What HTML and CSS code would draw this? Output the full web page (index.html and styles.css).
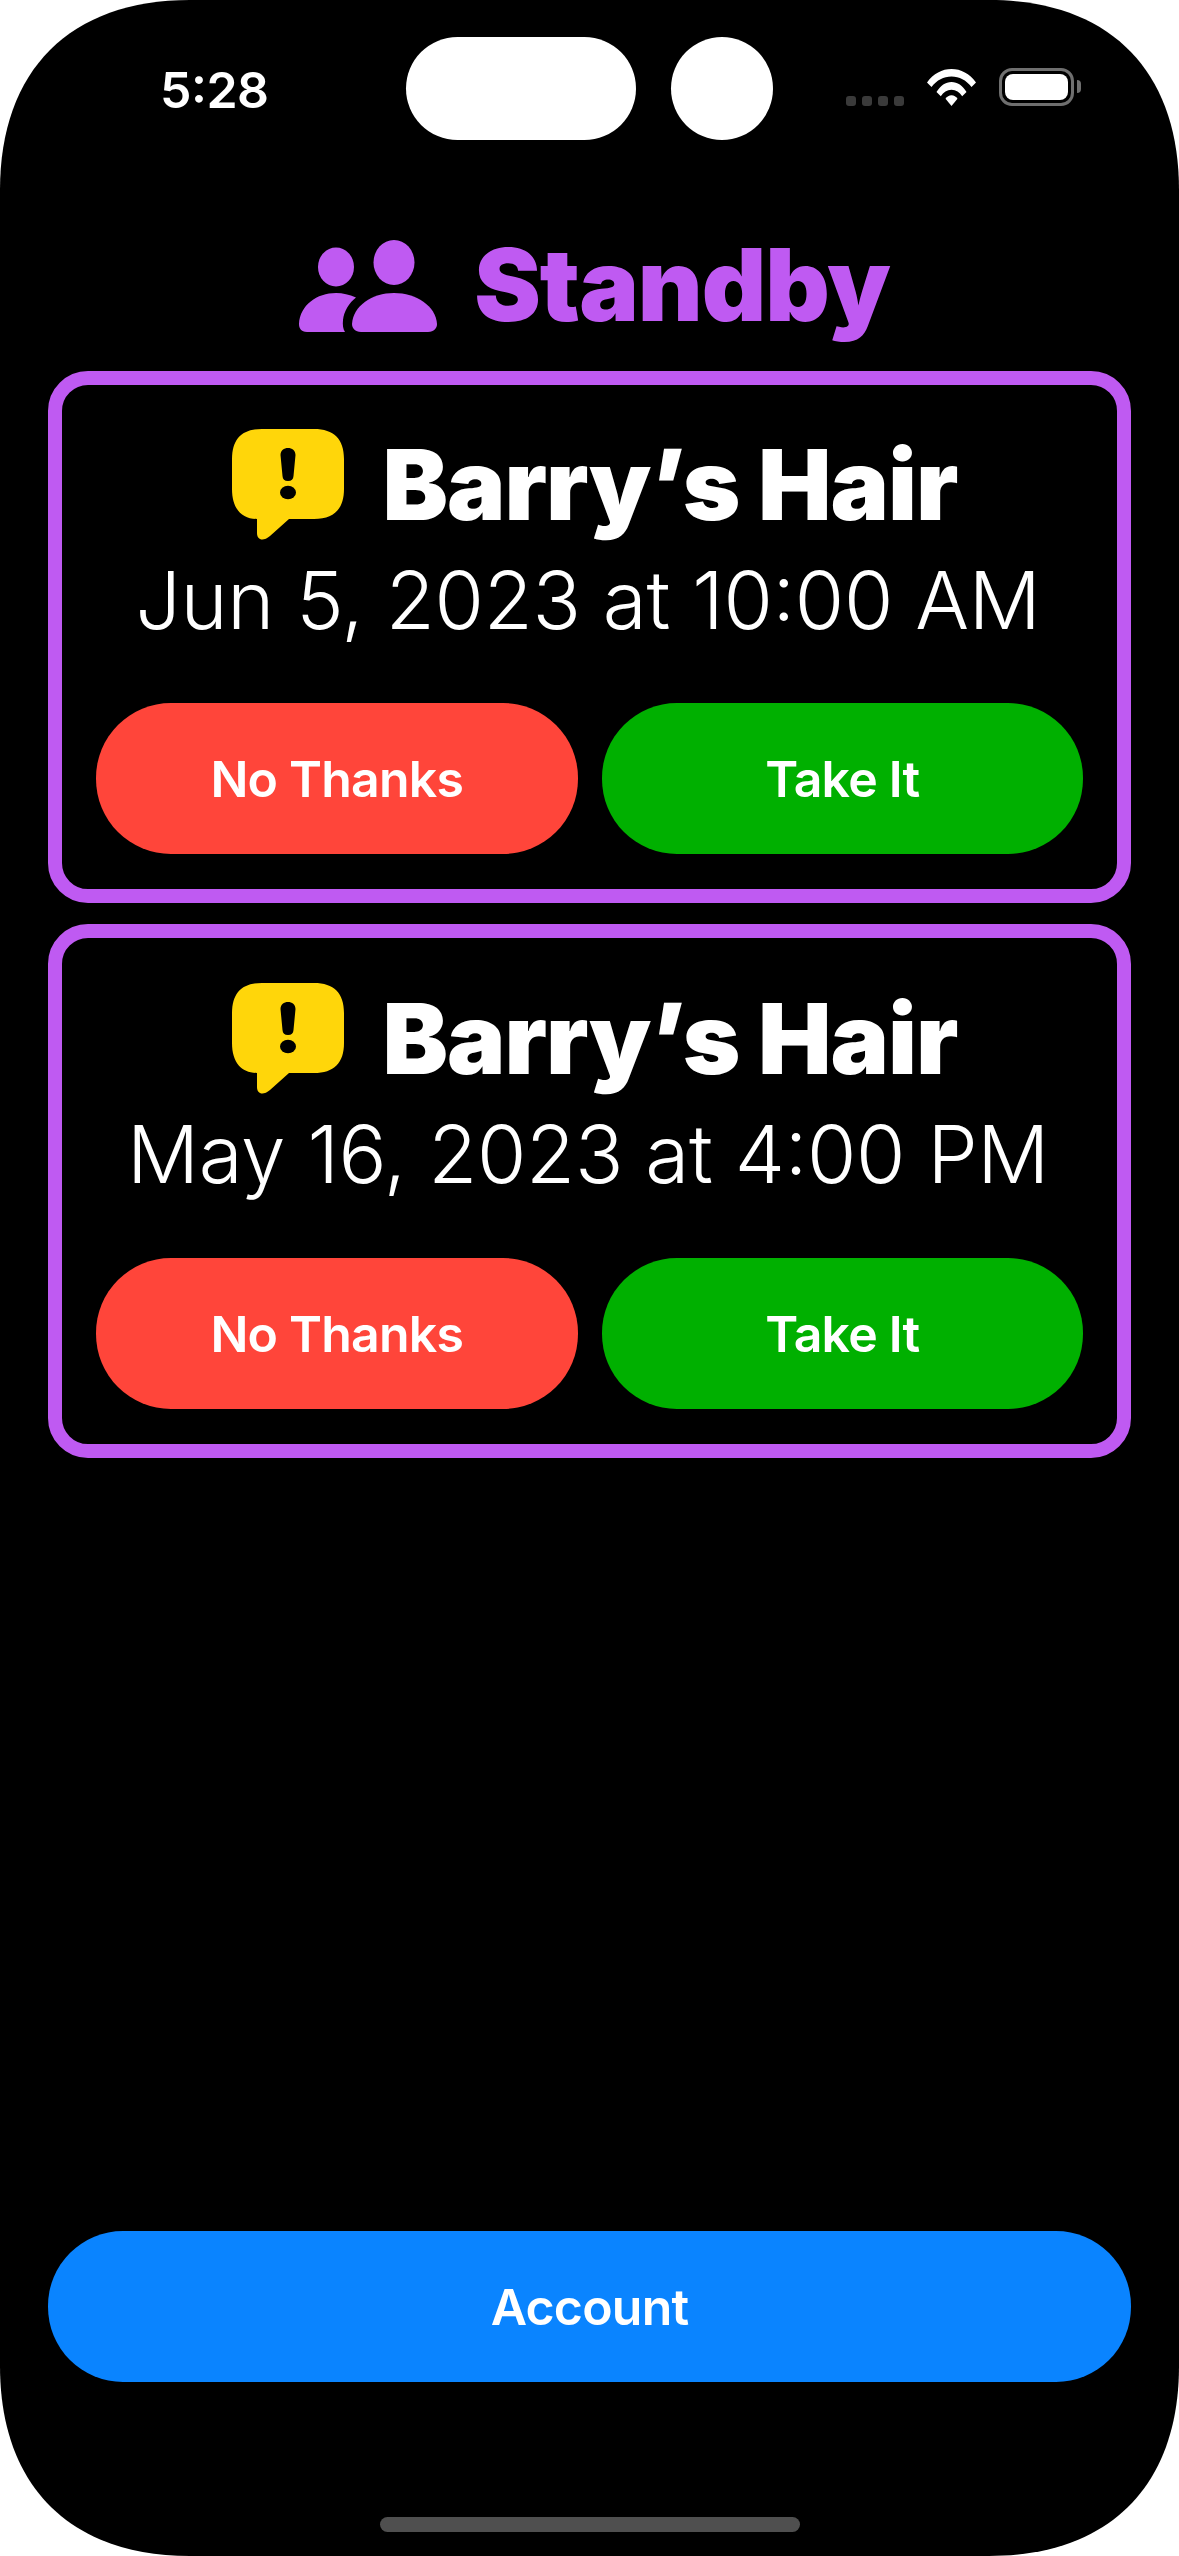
FILE: index.html
```html
<!DOCTYPE html>
<html lang="en">
<head>
  <meta charset="UTF-8" />
  <title>Standby</title>
  <link rel="stylesheet" href="styles.css">
</head>
<body>
  <div class="screen">
    <!-- STATUS BAR -->
    <div class="status-bar">
      <div class="time">5:28</div>
      <div class="island-pill"></div>
      <div class="island-dot"></div>
      <div class="signal">
        <span></span><span></span><span></span><span></span>
      </div>
      <svg class="wifi" viewBox="0 0 49 37">
        <path d="M0 13.500 C6.500 4.500 15 0 24.500 0 C34 0 42.500 4.500 49 13.500 L44.500 18 C39 11 32.500 7.500 24.500 7.500 C16.500 7.500 10 11 4.500 18 Z" fill="#fff"/>
        <path d="M9.500 23 C13.500 16.500 18.500 13 24.500 13 C30.500 13 35.500 16.500 39.500 23 L35.200 27.200 C32.500 23 29 20.800 24.500 20.800 C20 20.800 16.500 23 13.800 27.200 Z" fill="#fff"/>
        <path d="M18.500 29.800 C20 27.500 22 26.300 24.500 26.300 C27 26.300 29 27.500 30.500 29.800 L24.500 37 Z" fill="#fff"/>
      </svg>
      <div class="battery"><div class="battery-fill"></div></div>
      <div class="battery-tip"></div>
    </div>

    <!-- HEADER -->
    <h1 class="page-title">
      <svg class="people-icon" viewBox="0 0 138 92">
        <ellipse cx="37" cy="27" rx="18" ry="19.500" fill="#bf5af2"/>
        <ellipse cx="95" cy="22.500" rx="20.500" ry="22.500" fill="#bf5af2"/>
        <path d="M8 92 C2 92 0 88 0 84 C1 65 18 53 37 53 C44 53 50 54.500 57 57.500 C50 63 45 71 44 80 C43.500 85 44 89 46 92 Z" fill="#bf5af2"/>
        <path d="M62 92 C56 92 53 88 53 84 C54 66 73 53 95 53 C117 53 137 66 138 84 C138 88 135 92 129 92 Z" fill="#bf5af2"/>
      </svg>
      <span class="page-title-text">Standby</span>
    </h1>

    <!-- OFFERS -->
    <div class="card">
      <div class="card-title">
        <svg class="alert-icon" viewBox="0 0 112 111">
          <path d="M30 0 H82 C102 0 112 10 112 30 V60 C112 80 102 90 82 90 H57 L38 107 C31 113 25 111 25 104 V90 C10 90 0 80 0 60 V30 C0 10 10 0 30 0 Z" fill="#ffd60a"/>
          <path d="M48.500 26 C48.500 21.500 52 19 56 19 C60 19 63.500 21.500 63.500 26 L61.500 47 C61.300 50.500 59.500 52 56 52 C52.500 52 50.700 50.500 50.500 47 Z" fill="#000"/>
          <ellipse cx="56" cy="63.500" rx="8" ry="6.800" fill="#000"/>
        </svg>
        <span>Barry<span class="apos">'</span>s Hair</span>
      </div>
      <div class="card-date">Jun 5, 2023 at 10:00 AM</div>
      <div class="card-actions">
        <button class="btn btn-red">No Thanks</button>
        <button class="btn btn-green">Take It</button>
      </div>
    </div>

    <div class="card">
      <div class="card-title">
        <svg class="alert-icon" viewBox="0 0 112 111">
          <path d="M30 0 H82 C102 0 112 10 112 30 V60 C112 80 102 90 82 90 H57 L38 107 C31 113 25 111 25 104 V90 C10 90 0 80 0 60 V30 C0 10 10 0 30 0 Z" fill="#ffd60a"/>
          <path d="M48.500 26 C48.500 21.500 52 19 56 19 C60 19 63.500 21.500 63.500 26 L61.500 47 C61.300 50.500 59.500 52 56 52 C52.500 52 50.700 50.500 50.500 47 Z" fill="#000"/>
          <ellipse cx="56" cy="63.500" rx="8" ry="6.800" fill="#000"/>
        </svg>
        <span>Barry<span class="apos">'</span>s Hair</span>
      </div>
      <div class="card-date">May 16, 2023 at 4:00 PM</div>
      <div class="card-actions">
        <button class="btn btn-red">No Thanks</button>
        <button class="btn btn-green">Take It</button>
      </div>
    </div>

    <button class="btn btn-blue">Account</button>
    <div class="home-indicator"></div>
  </div>
</body>
</html>
```

FILE: styles.css
```css
body {
  margin: 0;
  background: #fff;
  font-family: Inter, "Liberation Sans", sans-serif;
  font-feature-settings: "calt";
  color: #fff;
}

.screen {
  box-sizing: border-box;
  width: 1179px;
  height: 2556px;
  overflow: hidden;
  display: flex;
  flex-direction: column;
  padding: 37px 48px 24px;
  background: #000;
  clip-path: path("M0 190 C0 70 70 0 190 0 H989 C1109 0 1179 70 1179 190 V2366 C1179 2486 1109 2556 989 2556 H190 C70 2556 0 2486 0 2366 Z");
}

.status-bar {
  display: flex;
  align-items: flex-start;
  height: 103px;
}

.time {
  width: 107px;
  margin-left: 112px;
  margin-top: 23px;
  font-size: 50px;
  font-weight: 600;
  line-height: 60px;
  letter-spacing: -0.5px;
  white-space: nowrap;
}

.island-pill {
  width: 230px;
  height: 103px;
  margin-left: 139px;
  border-radius: 52px;
  background: #fff;
}

.island-dot {
  width: 102px;
  height: 103px;
  margin-left: 35px;
  border-radius: 50%;
  background: #fff;
}

.signal {
  display: flex;
  gap: 6px;
  margin: 59px 0 0 73px;
}

.signal span {
  width: 10px;
  height: 10px;
  border-radius: 3px;
  background: #3a3a3a;
}

.wifi {
  width: 49px;
  height: 37px;
  margin: 32px 0 0 23px;
}

.battery {
  box-sizing: border-box;
  width: 75px;
  height: 38px;
  margin: 31px 0 0 23px;
  padding: 3px;
  border: 3px solid #6f6f6f;
  border-radius: 13px;
}

.battery-fill {
  height: 100%;
  border-radius: 8px;
  background: #fff;
}

.battery-tip {
  width: 4px;
  height: 13px;
  margin: 43px 0 0 3px;
  border-radius: 0 6px 6px 0;
  background: #6f6f6f;
}

.page-title {
  display: flex;
  justify-content: center;
  align-items: flex-end;
  gap: 37px;
  height: 120px;
  margin: 89px 0 22px 10px;
  font-size: 100px;
  font-weight: 900;
  line-height: 120px;
  letter-spacing: -1px;
  color: #bf5af2;
}

.page-title-text {
  margin-bottom: 4px;
}

.people-icon {
  width: 138px;
  height: 92px;
  margin-bottom: 17px;
}

.card {
  box-sizing: border-box;
  height: 532px;
  padding: 44px 34px 0;
  border: 14px solid #bf5af2;
  border-radius: 40px;
}

.card + .card {
  height: 534px;
  margin-top: 21px;
  padding-top: 45px;
}

.card-title {
  display: flex;
  justify-content: center;
  align-items: flex-start;
  gap: 39px;
  padding-left: 10px;
  font-size: 98px;
  font-weight: 900;
  line-height: 112px;
  letter-spacing: -1px;
}

.apos {
  display: inline-block;
  margin-left: -3px;
  transform: skewX(-12deg);
}

.alert-icon {
  flex: none;
  width: 112px;
  height: 111px;
}

.card-date {
  margin-top: 11px;
  padding-right: 3px;
  font-size: 80px;
  font-weight: 300;
  line-height: 96px;
  letter-spacing: -0.3px;
  text-align: center;
}

.card-actions {
  display: flex;
  gap: 24px;
  margin-top: 55px;
}

.card + .card .card-actions {
  margin-top: 56px;
}

.btn {
  display: block;
  flex: 1;
  height: 151px;
  padding: 0;
  border: 0;
  border-radius: 75px;
  font-family: inherit;
  font-size: 50px;
  font-weight: 600;
  letter-spacing: -0.8px;
  color: #fff;
}

.btn-red {
  background: #ff453a;
}

.btn-green {
  background: #00b000;
}

.btn-blue {
  flex: none;
  margin-top: auto;
  background: #0a84ff;
}

.home-indicator {
  width: 420px;
  height: 15px;
  margin: 135px auto 0;
  border-radius: 8px;
  background: #4f4f4f;
}
```
